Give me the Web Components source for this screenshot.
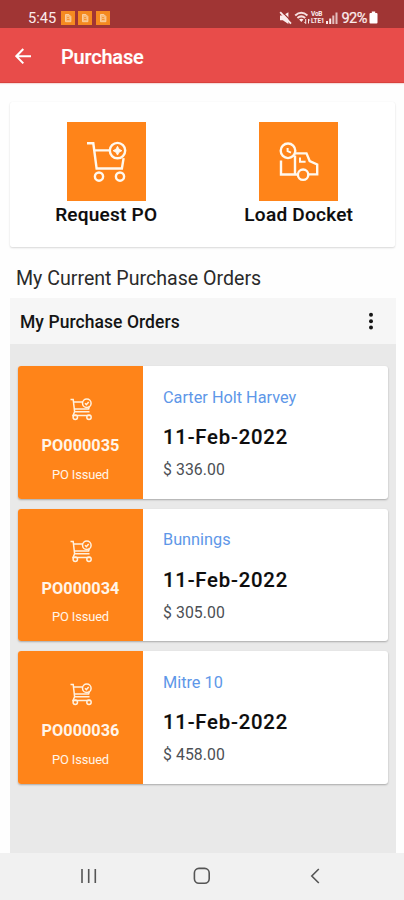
<!DOCTYPE html>
<html lang="en">
<head>
<meta charset="utf-8">
<title>Purchase</title>
<style>
html, body { margin: 0; height: 100%; overflow: hidden; background: #fefefe; }
body { font-family: Roboto, "Noto Sans", sans-serif; color: #111; }
</style>
</head>
<body>
<purchase-app></purchase-app>
<script>
const define = (name, html, setup) => customElements.define(name, class extends HTMLElement {
  constructor() {
    super();
    this.attachShadow({ mode: 'open' }).innerHTML = html;
  }
  connectedCallback() { if (setup) setup(this, this.shadowRoot); }
});

define('status-bar', `
<style>
:host { display: flex; align-items: center; height: 28px; box-sizing: border-box; padding: 7px 26px 0 28px; background: #a03534; color: #fbecec; font-size: 14.6px; line-height: 20px; }
.chips { display: flex; gap: 3.6px; margin-left: 4.5px; }
.signals { margin-left: auto; display: flex; align-items: center; }
.pct { margin-left: 3px; letter-spacing: -.5px; -webkit-text-stroke: .2px #fbecec; }
svg { display: block; }
.lte { display: flex; flex-direction: column; font-size: 6.5px; line-height: 7px; font-weight: 700; letter-spacing: -.2px; margin: 0 2px 0 0; }
</style>
<span>5:45</span>
<div class="chips"></div>
<div class="signals">
<svg width="13" height="14" viewBox="0 0 13 14"><path d="M1 4.6h2.8L9.4 1.3v11.6L3.8 9.2H1z" fill="#fbecec"/><path d="M2.2 .1l11 11" stroke="#a03534" stroke-width="1.4"/><path d="M1.2 1.2l10.8 11.4" stroke="#fbecec" stroke-width="1.8"/></svg>
<svg width="17" height="14" viewBox="0 0 17 14" style="margin-left:2px"><path d="M1.2 4.4Q7.3-1 13.4 4.4M3.4 7Q7.3 3.7 11.2 7" fill="none" stroke="#f6dfdf" stroke-width="2"/><path d="M5.1 8.5q2.2-1.7 4.4 0L7.3 11z" fill="#fbecec"/><path d="M11.7 8v4.5m-1.3-1.6l1.3 1.6M14.5 12.5V8m1.3 1.6L14.5 8" stroke="#fbecec" fill="none"/></svg>
<div class="lte"><span>VoB</span><span>LTE1</span></div>
<svg width="12" height="12" viewBox="0 0 12 12"><g fill="#fbecec"><path d="M0 9h2v3H0zM3.2 6.5h2V12h-2z"/><path d="M6.3 3.5h2V12h-2zM9.5.5h2V12h-2z" opacity=".75"/></g></svg>
<span class="pct">92%</span>
<svg width="9" height="13" viewBox="0 0 9 13" style="margin-left:2px"><path d="M2.8.5h3.4v1.4h1.3q1 0 1 1v8.6q0 1-1 1H1.5q-1 0-1-1V2.9q0-1 1-1h1.3z" fill="#fff"/></svg>
</div>`, (el, root) => {
  root.querySelector('.chips').innerHTML = '<svg width="14" height="14" viewBox="0 0 14 14"><path d="M0 0h14v14H0z" fill="#f58a20"/><path d="M4.5 3.5h3.4l2 2v5.2H4.5z" fill="#f9bc7d" stroke="#fbd3a8" stroke-width=".9"/><path d="M6 6.6h2M6 8.5h2.5" stroke="#f58a20" stroke-width=".8"/></svg>'.repeat(3);
});

define('app-bar', `
<style>
:host { display: flex; align-items: center; height: 55px; box-sizing: border-box; padding: 3px 0 0 15px; background: #e84c4a; border-bottom: 1.5px solid #d9413c; color: #fff; font-size: 20px; font-weight: 500; line-height: 24px; box-shadow: 0 1px 1px #f5dcdb; }
span { margin-left: 29px; letter-spacing: -.2px; -webkit-text-stroke: .2px #fff; }
svg { display: block; }
</style>
<svg width="17" height="18" viewBox="0 0 17 18"><path d="M16 8.2H1.5M8.3 1L1.3 8.2l7 7.2" fill="none" stroke="#fff" stroke-width="2"/></svg>
<span><slot></slot></span>`);

const cart = `<g fill="none" stroke="#fff8ee" stroke-width="2.4">
<path d="M20 21.3h6.3l3.3 25.2h25.3l1.7-10.4M27.3 28.4h15"/>
<circle cx="50.5" cy="28.6" r="7.7"/><circle cx="32" cy="54.6" r="4.1"/><circle cx="53" cy="54.6" r="4.1"/></g>
<path d="M50.5 24.3l1.5 2.9 2.9 1.5-2.9 1.5-1.5 2.9-1.5-2.9-2.9-1.5 2.9-1.5z" fill="#fff8ee" stroke="#fff8ee" stroke-width=".9"/>`;
const truck = `<g fill="none" stroke="#fff8ee" stroke-width="2.4">
<circle cx="29" cy="28.8" r="7.3"/><path d="M28.6 26v3.2l3.4 1.4" stroke-width="2"/>
<path d="M22 38.5v14h16.3M36 33.5V52.5M35.8 31.4h11.7l3.2 7.6 7.5 3.4v10h-8.6"/><path d="M41 35.5v4.3h5.6" stroke-width="2"/>
<circle cx="44.1" cy="52.7" r="5.2"/></g>`;

define('action-tile', `
<style>
:host { display: flex; flex-direction: column; align-items: center; width: 192.5px; font-size: 19px; font-weight: 500; line-height: 24px; color: #0c0c0c; }
svg { display: block; width: 79px; height: 79px; background: #ff8419; margin-bottom: 2px; }
span { letter-spacing: .25px; -webkit-text-stroke: .15px #0c0c0c; }
</style>
<svg viewBox="0 0 79 79"></svg><span><slot></slot></span>`, (el, root) => {
  root.querySelector('svg').innerHTML = el.getAttribute('icon') === 'truck' ? truck : cart;
});

define('action-card', `
<style>
:host { display: flex; box-sizing: border-box; height: 145.5px; margin: 18.5px 9px .5px 10px; padding-top: 20.5px; background: #fff; border-radius: 2px; box-shadow: 0 1px 2px rgba(0,0,0,.15), 0 0 1px rgba(0,0,0,.06); }
</style><slot></slot>`);

define('order-card', `
<style>
:host { display: flex; height: 132.5px; border-radius: 3px; overflow: hidden; background: #fff; box-shadow: 0 1px 2px rgba(0,0,0,.28); }
.tag { display: flex; flex-direction: column; align-items: center; width: 125px; background: #ff8419; color: #fff5e9; padding-top: 30.5px; box-sizing: border-box; }
.tag svg { width: 24px; height: 24px; display: block; }
.no { margin-top: 15.5px; font-size: 16.3px; font-weight: 700; line-height: 20px; }
.state { margin-top: 9.5px; font-size: 12.9px; line-height: 18px; letter-spacing: -.15px; }
.info { display: flex; flex-direction: column; padding: 20.6px 0 0 20px; }
.who { font-size: 16.3px; line-height: 22px; color: #5e97e8; }
.date { margin-top: 15.4px; font-size: 20.3px; line-height: 26px; font-weight: 500; color: #0d0d0d; letter-spacing: .8px; -webkit-text-stroke: .15px #0d0d0d; }
.sum { margin-top: 10px; font-size: 15.8px; line-height: 20px; color: #4c4f54; letter-spacing: .08px; }
</style>
<div class="tag">
<svg viewBox="0 0 24 24" fill="none" stroke="#fff1df" stroke-width="1.5"><path d="M1.5 2.5h2.7l1.4 12.2h14.9M5 5h9M5.4 12h14.2l.9-3M5.6 14.7L4 18.5h17.5"/><circle cx="17.8" cy="6.2" r="4.3"/><path d="M16 6.2l1.4 1.4 2.3-2.5"/><circle cx="6.3" cy="20.3" r="2.2"/><circle cx="20" cy="20.3" r="2.2"/></svg>
<div class="no"></div><div class="state">PO Issued</div></div>
<div class="info"><div class="who"><slot></slot></div><div class="date"></div><div class="sum"></div></div>`, (el, root) => {
  root.querySelector('.no').textContent = el.getAttribute('number');
  root.querySelector('.date').textContent = el.getAttribute('date');
  root.querySelector('.sum').textContent = '$ ' + el.getAttribute('total');
});

define('orders-panel', `
<style>
:host { display: flex; flex-direction: column; flex: 1; margin: 0 8.5px 0 9.5px; background: #e9e9e9; }
header { display: flex; align-items: center; justify-content: space-between; height: 46px; padding: 0 22px 0 10.5px; background: #f6f6f6; font-size: 17.5px; font-weight: 500; line-height: 24px; color: #151515; }
header span { padding-top: 2px; letter-spacing: .06px; }
.list { display: flex; flex-direction: column; gap: 10px; padding: 22.3px 7.5px 0 8.5px; }
svg { display: block; }
</style>
<header><span>My Purchase Orders</span><svg width="6" height="18" viewBox="0 0 6 18"><g fill="#161616"><circle cx="3" cy="2.8" r="2"/><circle cx="3" cy="9.2" r="2"/><circle cx="3" cy="15.6" r="2"/></g></svg></header>
<div class="list"><slot></slot></div>`);

define('nav-bar', `
<style>
:host { display: flex; height: 47px; background: #f1f1f1; }
svg { display: block; }
</style>
<svg width="404" height="47" viewBox="0 0 404 47" fill="none" stroke="#555" stroke-width="1.6"><path d="M82 16v14M88.7 16v14M95.3 16v14"/><rect x="194.4" y="15.4" width="14.8" height="14.8" rx="4.5"/><path d="M318.8 16l-7 7 7 7"/></svg>`);

define('purchase-app', `
<style>
:host { display: flex; flex-direction: column; width: 404px; height: 900px; background: #fefefe; }
h2 { margin: 18.5px 0 0 16px; height: 32px; font-size: 19.6px; font-weight: 400; line-height: 26px; color: #2a2a2a; }
</style>
<status-bar></status-bar>
<app-bar>Purchase</app-bar>
<action-card><action-tile>Request PO</action-tile><action-tile icon="truck">Load Docket</action-tile></action-card>
<h2>My Current Purchase Orders</h2>
<orders-panel>
<order-card number="PO000035" date="11-Feb-2022" total="336.00">Carter Holt Harvey</order-card>
<order-card number="PO000034" date="11-Feb-2022" total="305.00">Bunnings</order-card>
<order-card number="PO000036" date="11-Feb-2022" total="458.00">Mitre 10</order-card>
</orders-panel>
<nav-bar></nav-bar>`);
</script>
</body>
</html>
